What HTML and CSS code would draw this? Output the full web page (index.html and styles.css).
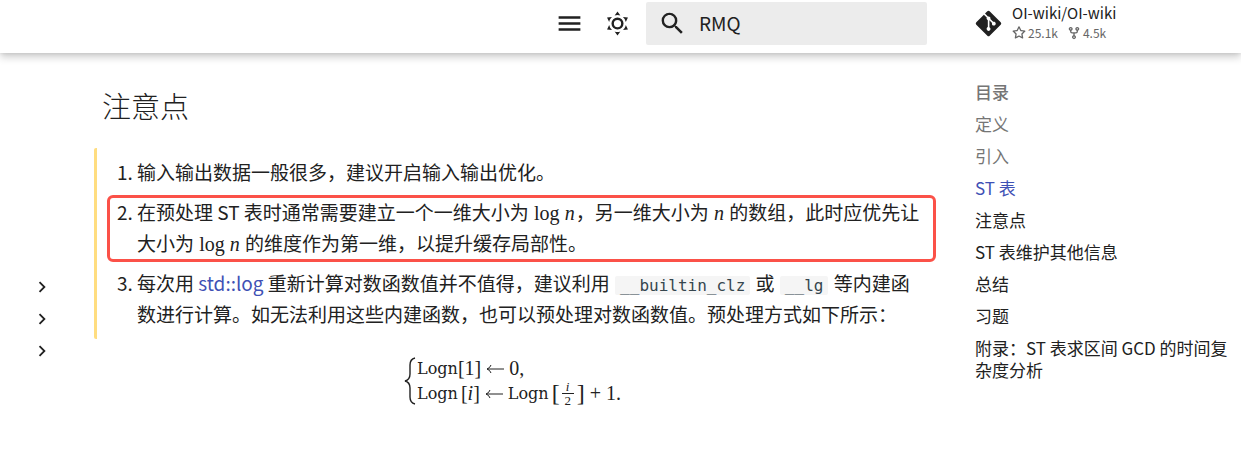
FILE: index.html
```
<!DOCTYPE html>
<html lang="zh-CN">
<head>
    <meta charset="UTF-8">
    <meta name="viewport" content="width=device-width, initial-scale=1.0">
    <title>ST 表 - OI Wiki</title>
    <link rel="stylesheet" href="styles.css">
</head>
<body>
    <header class="header">
        <button class="icon-btn" aria-label="菜单">
            <svg viewBox="0 0 24 24"><path d="M3 6h18v2H3V6m0 5h18v2H3v-2m0 5h18v2H3v-2Z"/></svg>
        </button>
        <button class="icon-btn" aria-label="切换主题">
            <svg viewBox="0 0 24 24"><path d="M12 7a5 5 0 0 1 5 5 5 5 0 0 1-5 5 5 5 0 0 1-5-5 5 5 0 0 1 5-5m0 2a3 3 0 0 0-3 3 3 3 0 0 0 3 3 3 3 0 0 0 3-3 3 3 0 0 0-3-3m0-7 2.39 3.42C13.65 5.15 12.84 5 12 5c-.84 0-1.65.15-2.39.42L12 2M3.34 7l4.16-.35A7.2 7.2 0 0 0 5.94 8.5c-.44.74-.69 1.5-.83 2.29L3.34 7m.02 10 1.76-3.77a7.131 7.131 0 0 0 2.38 4.14L3.36 17M20.65 7l-1.77 3.79a7.023 7.023 0 0 0-2.38-4.15l4.15.36m-.01 10-4.14.36c.59-.51 1.12-1.14 1.54-1.86.42-.73.69-1.5.83-2.29L20.64 17M12 22l-2.41-3.44c.74.27 1.55.44 2.41.44.82 0 1.63-.17 2.37-.44L12 22Z"/></svg>
        </button>
        <form class="search">
            <label for="search-input" aria-label="搜索">
                <svg viewBox="0 0 24 24"><path d="M9.5 3A6.5 6.5 0 0 1 16 9.5c0 1.61-.59 3.09-1.56 4.23l.27.27h.79l5 5-1.5 1.5-5-5v-.79l-.27-.27A6.516 6.516 0 0 1 9.5 16 6.5 6.5 0 0 1 3 9.5 6.5 6.5 0 0 1 9.5 3m0 2C7 5 5 7 5 9.5S7 14 9.5 14 14 12 14 9.5 12 5 9.5 5Z"/></svg>
            </label>
            <input id="search-input" type="text" value="RMQ">
        </form>
        <a class="source" href="#">
            <svg class="git" viewBox="0 0 448 512"><path d="M439.55 236.05 244 40.45a28.87 28.87 0 0 0-40.81 0l-40.66 40.63 51.52 51.52c27.06-9.14 52.68 16.77 43.39 43.68l49.66 49.66c34.23-11.8 61.18 31 35.47 56.69-26.49 26.49-70.21-2.87-56-37.34L240.22 199v121.85c25.3 12.54 22.26 41.85 9.08 55a34.34 34.34 0 0 1-48.55 0c-17.57-17.6-11.07-46.91 11.25-56v-123c-20.8-8.51-24.6-30.74-18.64-45L142.57 101 8.45 235.14a28.86 28.86 0 0 0 0 40.81l195.61 195.6a28.86 28.86 0 0 0 40.8 0l194.69-194.69a28.86 28.86 0 0 0 0-40.81z"/></svg>
            <span class="repo">
                <span class="repo-name">OI-wiki/OI-wiki</span>
                <span class="facts">
                    <span class="fact">
                        <svg viewBox="0 0 16 16"><path d="M8 .25a.75.75 0 0 1 .673.418l1.882 3.815 4.21.612a.75.75 0 0 1 .416 1.279l-3.046 2.97.719 4.192a.751.751 0 0 1-1.088.791L8 12.347l-3.766 1.98a.75.75 0 0 1-1.088-.79l.72-4.194L.818 6.374a.75.75 0 0 1 .416-1.28l4.21-.611L7.327.668A.75.75 0 0 1 8 .25Zm0 2.445L6.615 5.5a.75.75 0 0 1-.564.41l-3.097.45 2.24 2.184a.75.75 0 0 1 .216.664l-.528 3.084 2.769-1.456a.75.75 0 0 1 .698 0l2.77 1.456-.53-3.084a.75.75 0 0 1 .216-.664l2.24-2.183-3.096-.45a.75.75 0 0 1-.564-.41L8 2.694Z"/></svg>25.1k
                    </span>
                    <span class="fact">
                        <svg viewBox="0 0 16 16"><path d="M5 5.372v.878c0 .414.336.75.75.75h4.5a.75.75 0 0 0 .75-.75v-.878a2.25 2.25 0 1 1 1.5 0v.878a2.25 2.25 0 0 1-2.25 2.25h-1.5v2.128a2.251 2.251 0 1 1-1.5 0V8.5h-1.5A2.25 2.25 0 0 1 3.5 6.25v-.878a2.25 2.25 0 1 1 1.5 0ZM5 3.25a.75.75 0 1 0-1.5 0 .75.75 0 0 0 1.5 0Zm6.75.75a.75.75 0 1 0 0-1.5.75.75 0 0 0 0 1.5Zm-3 8.75a.75.75 0 1 0-1.5 0 .75.75 0 0 0 1.5 0Z"/></svg>4.5k
                    </span>
                </span>
            </span>
        </a>
    </header>

    <div class="container">
        <nav class="sidebar" aria-label="导航">
            <button aria-label="展开"><svg viewBox="0 0 24 24"><path d="M8.59 16.58 13.17 12 8.59 7.41 10 6l6 6-6 6-1.41-1.42Z"/></svg></button>
            <button aria-label="展开"><svg viewBox="0 0 24 24"><path d="M8.59 16.58 13.17 12 8.59 7.41 10 6l6 6-6 6-1.41-1.42Z"/></svg></button>
            <button aria-label="展开"><svg viewBox="0 0 24 24"><path d="M8.59 16.58 13.17 12 8.59 7.41 10 6l6 6-6 6-1.41-1.42Z"/></svg></button>
        </nav>

        <main class="content">
            <h2>注意点</h2>
            <ol class="notes">
                <li>输入输出数据一般很多，建议开启输入输出优化。</li>
                <li class="marked">在预处理 ST 表时通常需要建立一个一维大小为 <span class="math">log <i>n</i></span>，另一维大小为 <span class="math"><i>n</i></span> 的数组，此时应优先让大小为 <span class="math">log <i>n</i></span> 的维度作为第一维，以提升缓存局部性。</li>
                <li>每次用 <a href="#">std::log</a> 重新计算对数函数值并不值得，建议利用 <code>__builtin_clz</code> 或 <code>__lg</code> 等内建函数进行计算。如无法利用这些内建函数，也可以预处理对数函数值。预处理方式如下所示：</li>
            </ol>
            <div class="formula">
                <svg class="brace" viewBox="0 0 12 48"><path d="M11 1C7 2 6 4 6 8v9c0 4-1 6-5 7 4 1 5 3 5 7v9c0 4 1 6 5 7"/></svg>
                <div class="cases">
                    <div class="case"><span class="tt">Logn</span><span>[1]</span><svg class="arrow" viewBox="0 0 18 10"><path d="M18 5H1M5 1Q4 4 1 5 4 6 5 9"/></svg><span>0,</span></div>
                    <div class="case">
                        <span class="tt">Logn</span><span class="index">[<i>i</i>]</span><svg class="arrow" viewBox="0 0 18 10"><path d="M18 5H1M5 1Q4 4 1 5 4 6 5 9"/></svg><span class="tt">Logn</span>
                        <span class="bracket">[</span><span class="frac"><i>i</i><span>2</span></span><span class="bracket">]</span>
                        <span class="plus">+ 1.</span>
                    </div>
                </div>
            </div>
        </main>

        <nav class="toc" aria-label="目录">
            <div class="toc-title">目录</div>
            <a class="passed" href="#">定义</a>
            <a class="passed" href="#">引入</a>
            <a class="active" href="#">ST 表</a>
            <a href="#">注意点</a>
            <a href="#">ST 表维护其他信息</a>
            <a href="#">总结</a>
            <a href="#">习题</a>
            <a href="#">附录：ST 表求区间 GCD 的时间复杂度分析</a>
        </nav>
    </div>
</body>
</html>
```

FILE: styles.css
```
* {
    box-sizing: border-box;
}
body {
    font-family: "Noto Sans CJK SC", sans-serif;
    margin: 0;
    background: white;
    color: #212121;
    font-size: 19px;
    line-height: 31px;
}
a {
    color: #3f51b5;
    text-decoration: none;
}
svg {
    display: block;
    fill: currentColor;
}
button {
    border: none;
    padding: 0;
    background: none;
    color: inherit;
    cursor: pointer;
}
.header {
    display: flex;
    justify-content: flex-end;
    height: 53px;
    padding-top: 2px;
    box-shadow: 0 0 4px rgba(0,0,0,0.1), 0 4px 8px rgba(0,0,0,0.2);
}
.icon-btn {
    width: 48px;
    height: 43px;
}
.icon-btn svg {
    width: 29px;
    height: 29px;
    margin: 0 auto;
}
.search {
    display: flex;
    align-items: center;
    width: 281px;
    height: 43px;
    margin: 0 48px 0 5px;
    padding: 0 12px;
    border-radius: 2px;
    background: #ececec;
}
.search svg {
    width: 29px;
    height: 29px;
}
.search input {
    flex: 1;
    min-width: 0;
    margin-left: 12px;
    padding: 0 0 2px;
    border: none;
    outline: none;
    background: transparent;
    color: inherit;
    font: inherit;
}
.source {
    display: flex;
    align-items: center;
    gap: 10px;
    width: 266px;
    height: 43px;
    color: #212121;
}
.git {
    width: 27px;
    height: 29px;
}
.repo {
    padding-bottom: 2px;
}
.repo-name {
    display: block;
    font-size: 15px;
    line-height: 20px;
}
.facts {
    display: flex;
    gap: 9px;
    color: #666;
    font-size: 12px;
    line-height: 20px;
}
.fact {
    display: flex;
    align-items: center;
    gap: 2px;
}
.fact svg {
    width: 14px;
    height: 14px;
}
.container {
    display: grid;
    grid-template-columns: 94px 1fr 266px;
}
.sidebar {
    display: flex;
    flex-direction: column;
    gap: 10px;
    padding: 223px 0 0 31px;
}
.sidebar svg {
    width: 22px;
    height: 22px;
}
.content {
    padding: 31px 52px 0 0;
}
h2 {
    margin: 0;
    padding-left: 8px;
    font-size: 29px;
    font-weight: 300;
    line-height: 42px;
}
.notes {
    margin: 22px 0 0;
    padding: 8px 0 10px 40px;
    border-left: 3px solid #ffdd80;
    border-radius: 2px;
}
.notes li + li {
    margin-top: 9px;
}
.marked {
    position: relative;
}
.marked::after {
    content: "";
    position: absolute;
    inset: -1px -13px -4px -30px;
    border: 3px solid #fb5148;
    border-radius: 6px;
}
code {
    margin: 0 1px;
    padding: 0 5px;
    border-radius: 2px;
    background: #f5f5f5;
    color: #36464e;
    font-family: "DejaVu Sans Mono", monospace;
    font-size: 16px;
    line-height: 20px;
}
.math {
    margin: 0 1px;
    font-family: "Liberation Serif", serif;
    font-size: 20px;
    line-height: 20px;
}
.formula {
    display: flex;
    justify-content: center;
    align-items: center;
    gap: 1px;
    margin-top: 17px;
    padding-left: 8px;
    font-family: "Liberation Serif", serif;
    font-size: 20px;
    line-height: 25px;
}
.brace {
    width: 12px;
    height: 48px;
    fill: none;
    stroke: #212121;
    stroke-width: 1.4;
}
.case {
    display: flex;
    align-items: center;
    height: 25px;
}
.tt {
    font-family: "DejaVu Serif", serif;
    font-size: 16px;
}
.arrow {
    width: 18px;
    height: 10px;
    margin: 0 5px;
    fill: none;
    stroke: #212121;
}
.index {
    margin-left: 3px;
}
.bracket {
    margin-left: 3px;
    font-size: 24px;
}
.frac {
    display: flex;
    flex-direction: column;
    align-items: center;
    width: 12px;
    margin-left: 2px;
    font-size: 13px;
    line-height: 13px;
}
.frac span {
    width: 100%;
    border-top: 1px solid #212121;
    text-align: center;
}
.plus {
    margin-left: 5px;
}
.toc {
    display: flex;
    flex-direction: column;
    gap: 10px;
    padding: 28px 8px 0 0;
    font-size: 17px;
    line-height: 22px;
}
.toc a {
    color: #212121;
}
.toc-title {
    color: #757575;
    font-weight: 500;
}
.toc .passed {
    color: #757575;
}
.toc .active {
    color: #3f51b5;
}
```
